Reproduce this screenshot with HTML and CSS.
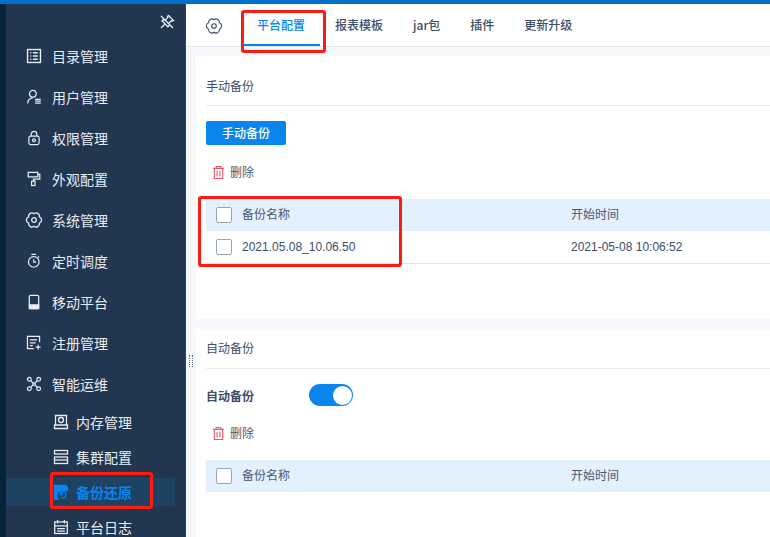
FILE: index.html
```html
<!DOCTYPE html>
<html lang="zh">
<head>
<meta charset="utf-8">
<title>平台配置</title>
<link rel="stylesheet" href="styles.css">
</head>
<body>
<div class="topbar"></div>
<div class="app">
  <div class="rail"></div>
  <aside class="sidebar">
    <div class="pin">
      <svg class="ic" viewBox="1 1 14 14"><path d="M9.500 1.500l5 5-1.200.6-1-.3-2.600 2.600.2 2.400-1 1L2.900 6.800l1-1 2.400.2 2.600-2.600-.3-1zM5.500 10.500L2 14M2 2l12 12"/></svg>
    </div>
    <nav class="menu">
      <a class="item"><svg class="ic" viewBox="1.500 1.500 13 13"><rect x="2" y="2" width="12" height="12"/><path d="M4.500 5h1M7 5h4.500M4.500 8h1M7 8h4.500M4.500 11h1M7 11h4.500"/></svg>目录管理</a>
      <a class="item"><svg class="ic" viewBox="0.500 0.500 14.500 15"><circle cx="6.500" cy="4.500" r="3.600"/><path d="M1 15c0-3.500 2.500-6 5.500-6M9 10.500h6M9 12.500h6M9 14.500h6"/></svg>用户管理</a>
      <a class="item"><svg class="ic" viewBox="1 0.500 14 15"><rect x="2.500" y="6" width="11" height="9" rx="2"/><path d="M5 6V4a3 3 0 016 0v2"/><circle cx="8" cy="10.500" r="1.500"/></svg>权限管理</a>
      <a class="item"><svg class="ic" viewBox="1.500 1 14 14.500"><path d="M2.500 1.500h10v4.500h-10zM12.500 3.500h2v5H8v2"/><rect x="6" y="10.500" width="3.500" height="4.500"/></svg>外观配置</a>
      <a class="item"><svg class="ic" viewBox="1 1 14 14"><path d="M8 1.700A3.400 3.400 0 0113.460 4.850A3.400 3.400 0 0113.460 11.150A3.400 3.400 0 018 14.300A3.400 3.400 0 012.540 11.150A3.400 3.400 0 012.540 4.850A3.400 3.400 0 018 1.700z"/><circle cx="8" cy="8" r="2.300"/></svg>系统管理</a>
      <a class="item"><svg class="ic" viewBox="1.500 0.500 13.500 15"><circle cx="8" cy="9" r="5.700"/><path d="M5.500 1h5M8 6v3.200h2.500M12.500 3l1.200 1.200"/></svg>定时调度</a>
      <a class="item"><svg class="ic" viewBox="1 0.500 14 15"><rect x="3" y="1" width="10" height="14" rx="1"/><path class="solid" d="M3 11h10v4H3z"/></svg>移动平台</a>
      <a class="item"><svg class="ic" viewBox="1 1.500 14.500 14.500"><path d="M14 8V2H1.500v12.500H8M4 5.500h7.500M4 8.500h6M4 11.500h3M10 13h5M12.500 10.500v5"/></svg>注册管理</a>
      <a class="item"><svg class="ic" viewBox="0.500 0.500 15 15"><circle cx="3" cy="3" r="2"/><circle cx="13" cy="3" r="2"/><circle cx="3" cy="13" r="2"/><circle cx="13" cy="13" r="2"/><circle cx="8" cy="8" r="1.300"/><path d="M4.500 4.500l2.500 2.500M11.500 4.500L9 7M4.500 11.500L7 9M11.500 11.500L9 9"/></svg>智能运维</a>
      <div class="submenu">
        <a class="subitem"><svg class="ic" viewBox="1 1 14 14"><path d="M2.500 1.500h11v9.500h-11zM1.500 11h13v3.500h-13z"/><circle cx="8" cy="6" r="2.500"/></svg>内存管理</a>
        <a class="subitem"><svg class="ic" viewBox="1 1 14 14"><rect x="1.500" y="1.500" width="13" height="3.500"/><rect x="1.500" y="8" width="13" height="6.500"/><path d="M1.500 11h13"/></svg>集群配置</a>
        <a class="subitem active"><svg class="ic" viewBox="1 1 14 14"><path class="solid" d="M1.500 1.500h11l2 2v3H8a5 5 0 00-3 8.500H1.500z"/><path d="M7.500 9.500a3 3 0 11.500 3.500M7.500 8v2.500H10"/></svg>备份还原</a>
        <a class="subitem"><svg class="ic" viewBox="1 0.500 14 14.500"><rect x="1.500" y="2.500" width="13" height="12"/><path d="M4.500 0.500v3.500M11.500 0.500v3.500M1.500 6.500h13M4 9.500h8M4 12h8"/></svg>平台日志</a>
      </div>
    </nav>
  </aside>
  <main class="main">
    <header class="tabs">
      <svg class="gear" viewBox="1 1 14 14"><path d="M8 1.700A3.400 3.400 0 0113.460 4.850A3.400 3.400 0 0113.460 11.150A3.400 3.400 0 018 14.300A3.400 3.400 0 012.540 11.150A3.400 3.400 0 012.540 4.850A3.400 3.400 0 018 1.700z"/><circle cx="8" cy="8" r="2.300"/></svg>
      <a class="tab current">平台配置</a>
      <a class="tab">报表模板</a>
      <a class="tab">jar包</a>
      <a class="tab">插件</a>
      <a class="tab">更新升级</a>
    </header>
    <div class="content">
      <span class="handle"></span>
      <section class="card first">
        <h2 class="card-title">手动备份</h2>
        <button class="btn">手动备份</button>
        <div class="del"><svg class="trash" viewBox="0 0 14 16"><path d="M1 3.500h12M4.500 3.500V1.500h5v2M2.500 3.500v11h9v-11M5.500 6.500v5.500M8.500 6.500v5.500"/></svg>删除</div>
        <div class="row head"><span class="check"></span><span class="name">备份名称</span><span class="time">开始时间</span></div>
        <div class="row body"><span class="check"></span><span class="name">2021.05.08_10.06.50</span><span class="time">2021-05-08 10:06:52</span></div>
      </section>
      <section class="card second">
        <h2 class="card-title">自动备份</h2>
        <div class="auto"><span class="auto-label">自动备份</span><span class="switch"><span class="knob"></span></span></div>
        <div class="del"><svg class="trash" viewBox="0 0 14 16"><path d="M1 3.500h12M4.500 3.500V1.500h5v2M2.500 3.500v11h9v-11M5.500 6.500v5.500M8.500 6.500v5.500"/></svg>删除</div>
        <div class="row head"><span class="check"></span><span class="name">备份名称</span><span class="time">开始时间</span></div>
      </section>
    </div>
  </main>
</div>
<div class="mark mark-tab"></div>
<div class="mark mark-table"></div>
<div class="mark mark-side"></div>
</body>
</html>
```
FILE: styles.css
```css
* { box-sizing: border-box; }
html, body { margin: 0; height: 537px; overflow: hidden; background: #fff; }
body { font-family: "Noto Sans CJK SC", "Liberation Sans", sans-serif; font-size: 12px; color: #3d4d66; position: relative; }
.topbar { height: 4px; background: #0070c9; }
.app { display: flex; height: 533px; }
.rail { width: 6px; background: #06233a; flex: none; }
.sidebar { width: 179px; background: #233650; flex: none; color: #e6edf5; overflow: hidden; }
.ic { width: 14px; height: 14px; fill: none; stroke: currentColor; stroke-width: 1.300; flex: none; overflow: visible; }
.ic .solid { fill: currentColor; }
.pin { height: 31px; display: flex; justify-content: flex-end; align-items: flex-start; padding: 11px 11px 0 0; }
.menu { display: flex; flex-direction: column; }
.item { height: 41px; flex: none; display: flex; align-items: center; gap: 11px; padding-left: 21px; font-size: 14px; line-height: 20px; }
.submenu { display: flex; flex-direction: column; }
.subitem { height: 35px; flex: none; display: flex; align-items: center; gap: 8px; padding-left: 48px; font-size: 14px; line-height: 20px; width: 169px; }
.subitem.active { color: #0a85ee; font-weight: 700; background: #1e4262; height: 28px; margin: 4px 0 3px; }
.main { flex: 1; min-width: 0; display: flex; flex-direction: column; background: #f6f8fb; border-left: 1px solid #33475f; }
.tabs { height: 43px; background: #fff; border-bottom: 1px solid #e6e9ee; display: flex; align-items: stretch; flex: none; padding-left: 21px; font-weight: 500; }
.gear { width: 14px; height: 14px; margin: 15px 22px 0 0; fill: none; stroke: #3d4d66; stroke-width: 1.100; flex: none; overflow: visible; }
.tab { padding: 12px 15px 0; line-height: 18px; color: #3d4d66; white-space: nowrap; }
.tab.current { width: 77px; padding: 12px 0 0 14px; color: #0a85ee; border-bottom: 2px solid #0a85ee; height: 42px; }
.content { flex: 1; min-height: 0; padding: 9px 0 0 10px; position: relative; display: flex; flex-direction: column; gap: 10px; }
.handle { position: absolute; left: 3px; top: 308px; width: 4px; height: 12px; border-left: 1px dotted #5f6f86; border-right: 1px dotted #5f6f86; }
.card { background: #fff; padding: 0 0 0 10px; flex: none; }
.first { height: 263px; }
.second { flex: 1; }
.card-title { margin: 0; height: 50px; padding-top: 21px; line-height: 18px; font-size: 12px; font-weight: 400; color: #3d4d66; border-bottom: 1px solid #e9ebee; }
.second .card-title { height: 40px; padding-top: 10px; }
.btn { display: block; margin-top: 15px; width: 80px; height: 24px; border: 0; border-radius: 2px; background: #0a85ee; color: #fff; font: 500 12px/24px "Noto Sans CJK SC", sans-serif; padding: 0; }
.del { display: flex; align-items: center; gap: 5px; height: 18px; margin: 18px 0 0 6px; line-height: 18px; color: #4d5a70; }
.trash { width: 13px; height: 15px; fill: none; stroke: #f0556e; stroke-width: 1.200; flex: none; }
.row { display: flex; align-items: center; height: 32px; padding-left: 10px; line-height: 18px; }
.head { background: #e2f1fd; margin-top: 18px; color: #4a5870; }
.head .name, .head .time { margin-bottom: 2px; }
.body { border-bottom: 1px solid #d9e6f2; height: 33px; padding-bottom: 1px; }
.body span { font-family: "Liberation Sans", "Noto Sans CJK SC", sans-serif; }
.check { width: 16px; height: 16px; border: 1px solid #9aa5b3; border-radius: 2px; background: #fff; flex: none; margin-right: 10px; }
.name { width: 329px; flex: none; }
.auto { display: flex; align-items: center; margin-top: 15px; height: 22px; }
.auto-label { width: 103px; font-weight: 700; color: #3d4d66; }
.switch { width: 44px; height: 22px; border-radius: 11px; background: #0a85ee; display: flex; justify-content: flex-end; align-items: center; padding-right: 1px; }
.knob { width: 19px; height: 19px; border-radius: 50%; background: #fff; }
.mark { position: absolute; border: 3px solid #fb1c12; border-radius: 3px; pointer-events: none; }
.mark-tab { left: 241px; top: 10px; width: 85px; height: 43px; }
.mark-table { left: 198px; top: 196px; width: 204px; height: 71px; }
.mark-side { left: 50px; top: 472px; width: 103px; height: 37px; }
```
